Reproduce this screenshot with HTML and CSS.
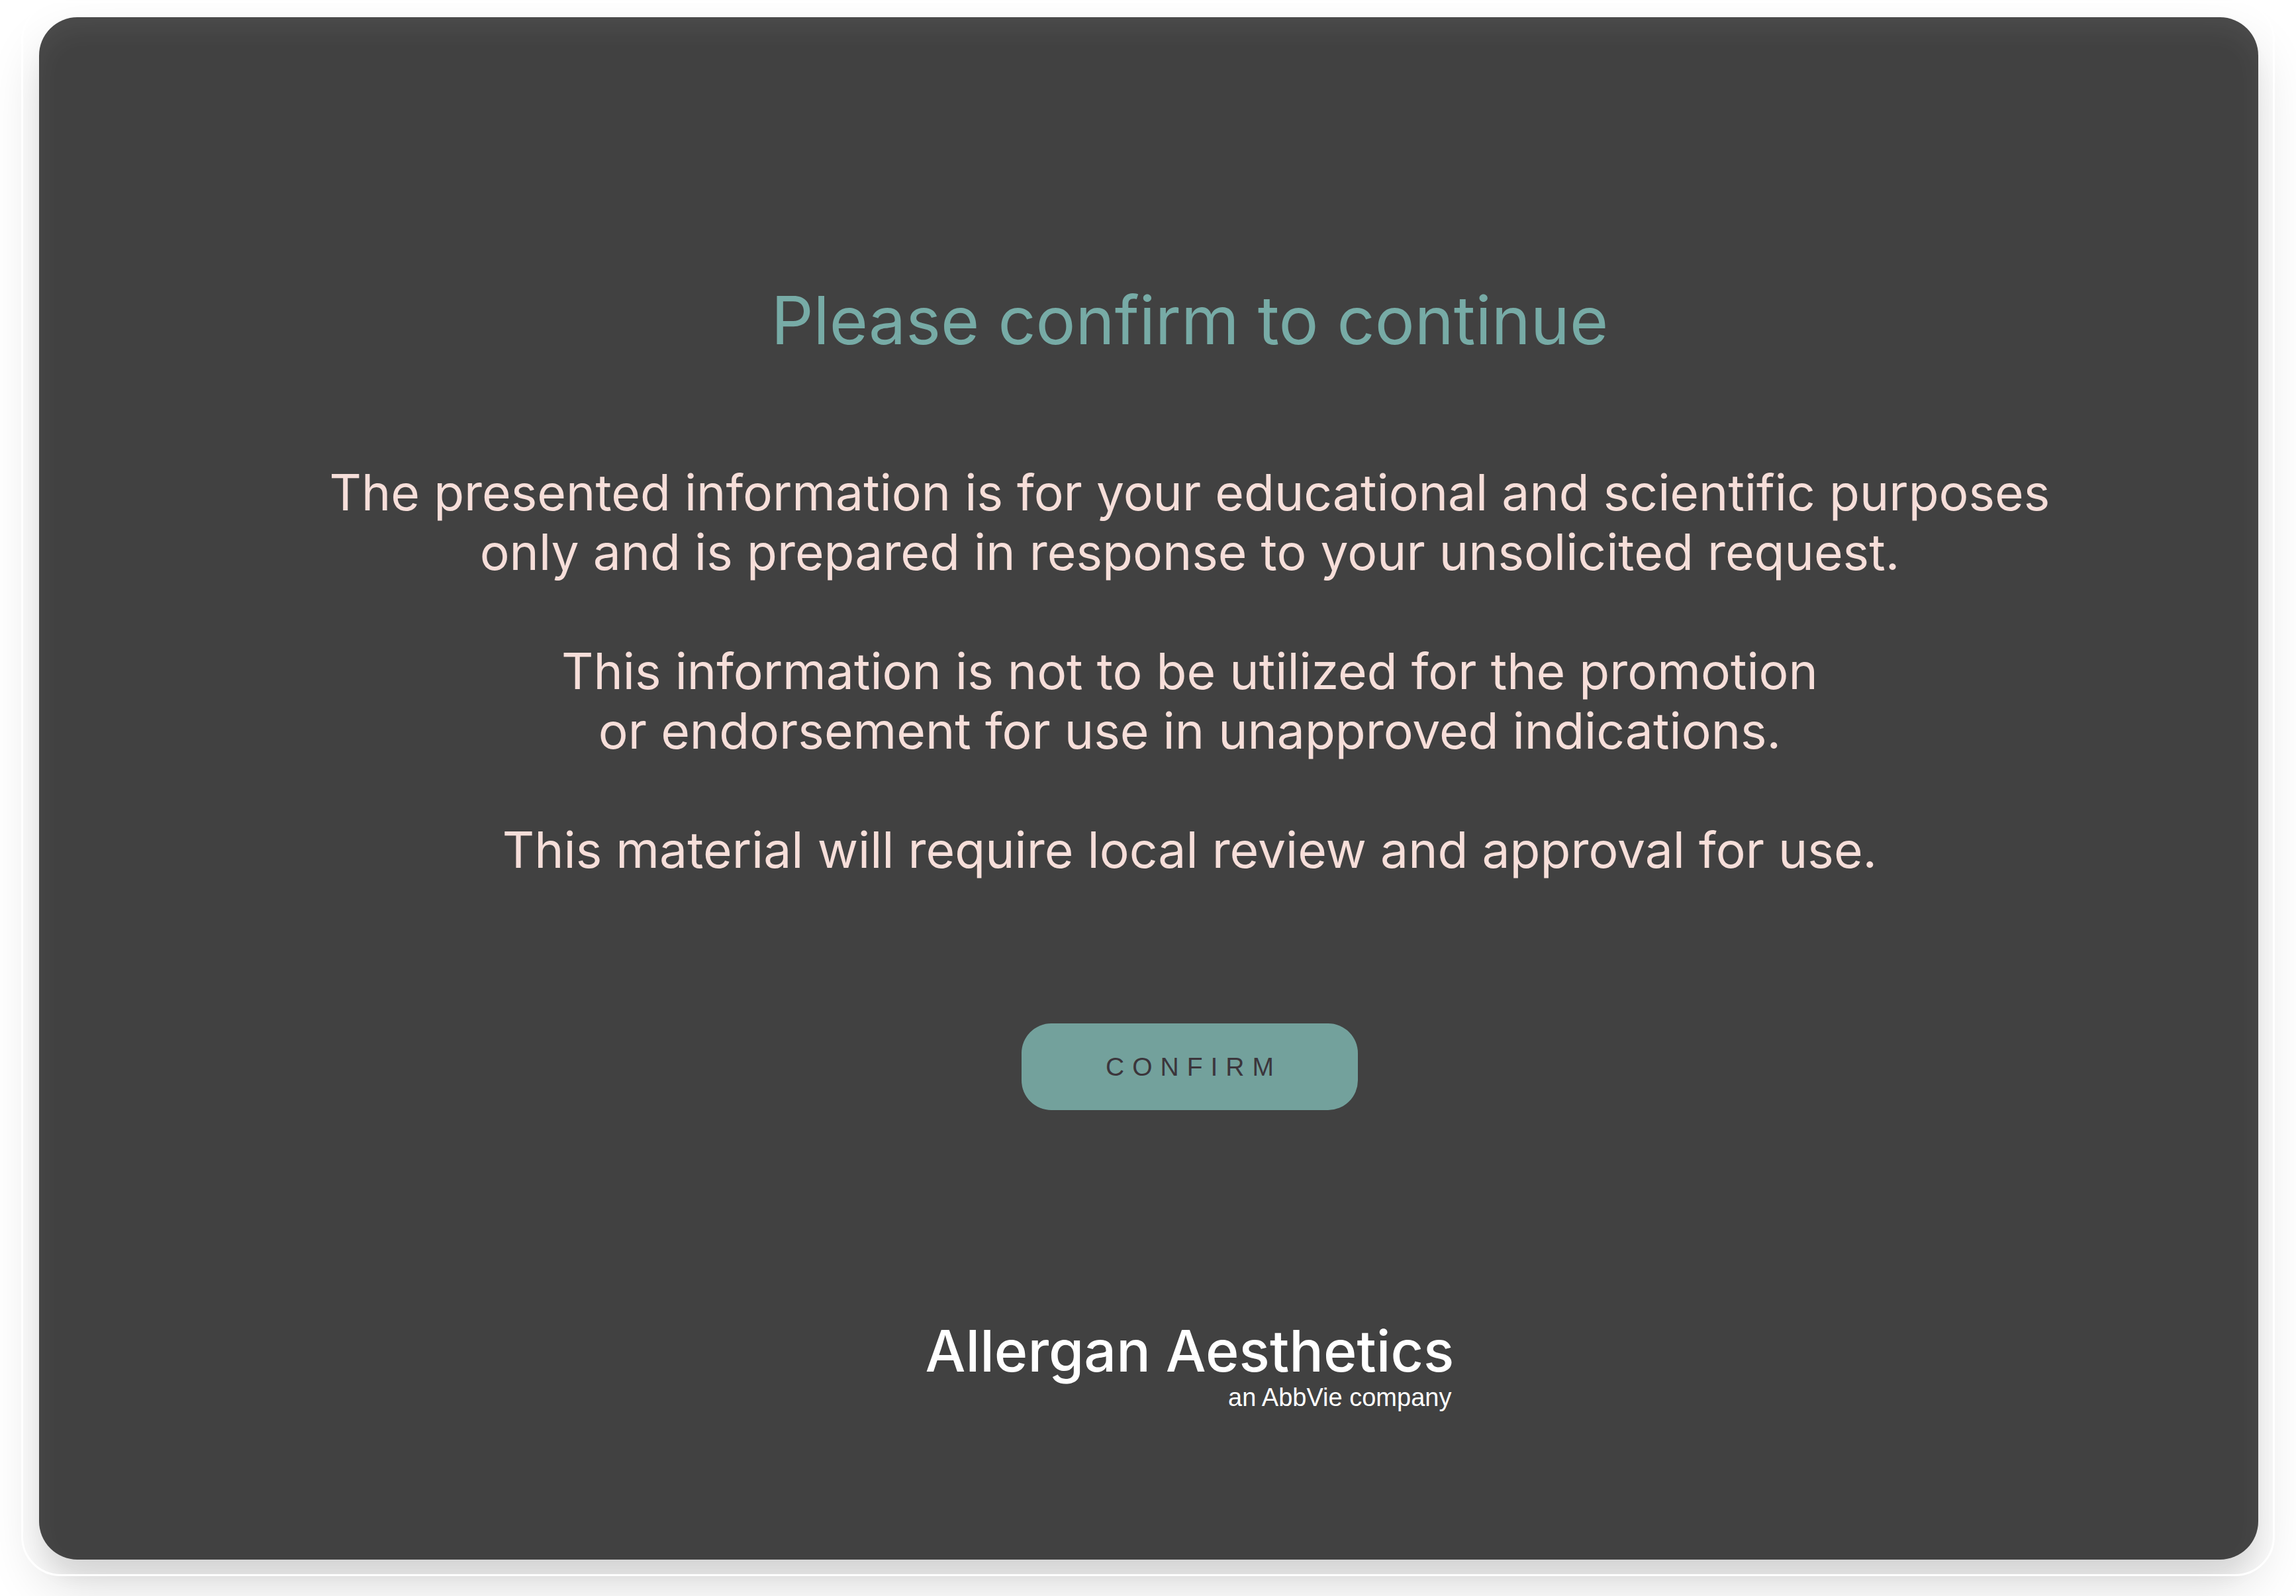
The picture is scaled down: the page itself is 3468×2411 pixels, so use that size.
FILE: index.html
```html
<!DOCTYPE html>
<html lang="en">
<head>
<meta charset="utf-8">
<meta name="viewport" content="width=device-width, initial-scale=1">
<title>Please confirm to continue</title>
<link rel="stylesheet" href="styles.css">
</head>
<body>
<div class="frame">
  <main class="card">
    <h1 class="title">Please confirm to continue</h1>
    <div class="notice">
      <p>The presented information is for your educational and scientific purposes<br>only and is prepared in response to your unsolicited request.</p>
      <p>This information is not to be utilized for the promotion<br>or endorsement for use in unapproved indications.</p>
      <p>This material will require local review and approval for use.</p>
    </div>
    <button class="confirm" type="button">CONFIRM</button>
    <div class="brand">
      <span class="brand-name">Allergan Aesthetics</span>
      <span class="brand-sub">an AbbVie company</span>
    </div>
  </main>
</div>
</body>
</html>
```
FILE: styles.css
```css
* {
  box-sizing: border-box;
}

body {
  display: flex;
  min-height: 100vh;
  margin: 0;
  padding: 1px 32px 30px;
  background: #fff;
  font-family: Inter, "Liberation Sans", sans-serif;
}

.frame {
  position: relative;
  display: flex;
  flex: 1;
  padding: 25px 25px 25px 27px;
}

/* white outline that sits on top of the card's soft shadow */
.frame::after {
  content: "";
  position: absolute;
  inset: 0;
  border: 3px solid #fff;
  border-radius: 60px;
  pointer-events: none;
}

.card {
  display: flex;
  flex: 1;
  flex-direction: column;
  align-items: center;
  padding: 398px 0 200px 124px;
  border-radius: 58px;
  background: #414141;
  box-shadow:
    inset 0 20px 40px rgba(255, 255, 255, 0.06),
    0 40px 80px rgba(0, 0, 0, 0.14),
    0 30px 30px -5px rgba(0, 0, 0, 0.05);
  text-align: center;
}

.title {
  margin: 0;
  color: #77aba6;
  font-size: 100px;
  font-weight: 400;
  line-height: 120px;
}

.notice {
  display: flex;
  flex-direction: column;
  gap: 90px;
  margin-top: 155px;
  color: #f6ded9;
  font-size: 75px;
  line-height: 90px;
}

.notice p {
  margin: 0;
}

.confirm {
  width: 508px;
  height: 131px;
  margin-top: 217px;
  padding: 0 0 0 12px;
  border: 0;
  border-radius: 45px;
  background: #73a19c;
  color: #3b353b;
  font-family: "Liberation Sans", Arial, sans-serif;
  font-size: 39px;
  letter-spacing: 12px;
}

.brand {
  display: flex;
  flex-direction: column;
  align-items: flex-end;
  margin-top: 316px;
  color: #fff;
}

.brand-name {
  font-size: 86px;
  font-weight: 500;
  line-height: 96px;
}

.brand-sub {
  padding-right: 4px;
  font-family: "Liberation Sans", Arial, sans-serif;
  font-size: 38px;
  line-height: 44px;
}
```
